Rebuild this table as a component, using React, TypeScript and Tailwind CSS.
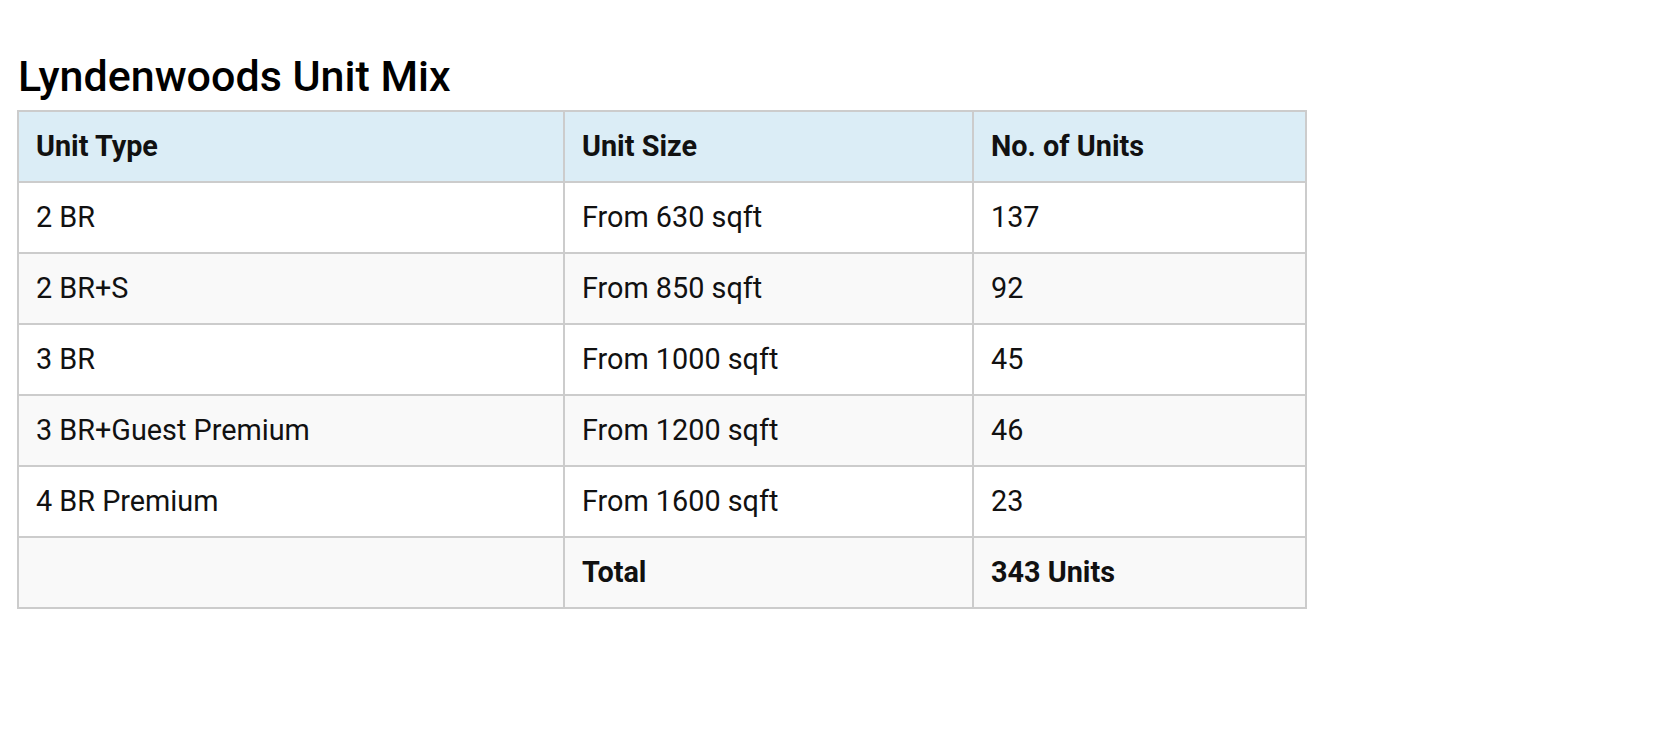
import React from "react";

const rows = [
  ["2 BR", "From 630 sqft", "137"],
  ["2 BR+S", "From 850 sqft", "92"],
  ["3 BR", "From 1000 sqft", "45"],
  ["3 BR+Guest Premium", "From 1200 sqft", "46"],
  ["4 BR Premium", "From 1600 sqft", "23"],
];

export default function App() {
  return (
    <div className="min-h-screen bg-white pl-[17px] pt-[51px] text-[#111]" style={{ fontFamily: "Roboto, 'Liberation Sans', sans-serif" }}>
      <h1 className="ml-[1px] text-[43px] font-medium leading-[50px] text-black">Lyndenwoods Unit Mix</h1>
      <table className="mt-[9px] border-collapse border-2 border-[#cccccc] text-[28.8px] table-fixed w-[1288px]">
        <colgroup>
          <col className="w-[546px]" />
          <col className="w-[409px]" />
          <col className="w-[333px]" />
        </colgroup>
        <thead>
          <tr className="bg-[#dbedf6] h-[71px]">
            <th className="border-2 border-[#cccccc] px-[17px] text-left font-bold">Unit Type</th>
            <th className="border-2 border-[#cccccc] px-[17px] text-left font-bold">Unit Size</th>
            <th className="border-2 border-[#cccccc] px-[17px] text-left font-bold">No. of Units</th>
          </tr>
        </thead>
        <tbody>
          {rows.map((r, i) => (
            <tr key={i} className={`h-[71px] ${i % 2 === 1 ? "bg-[#f9f9f9]" : "bg-white"}`}>
              <td className="border-2 border-[#cccccc] px-[17px]">{r[0]}</td>
              <td className="border-2 border-[#cccccc] px-[17px]">{r[1]}</td>
              <td className="border-2 border-[#cccccc] px-[17px]">{r[2]}</td>
            </tr>
          ))}
          <tr className="h-[71px] bg-[#f9f9f9]">
            <td className="border-2 border-[#cccccc] px-[17px]"></td>
            <td className="border-2 border-[#cccccc] px-[17px] font-bold">Total</td>
            <td className="border-2 border-[#cccccc] px-[17px] font-bold">343 Units</td>
          </tr>
        </tbody>
      </table>
    </div>
  );
}
